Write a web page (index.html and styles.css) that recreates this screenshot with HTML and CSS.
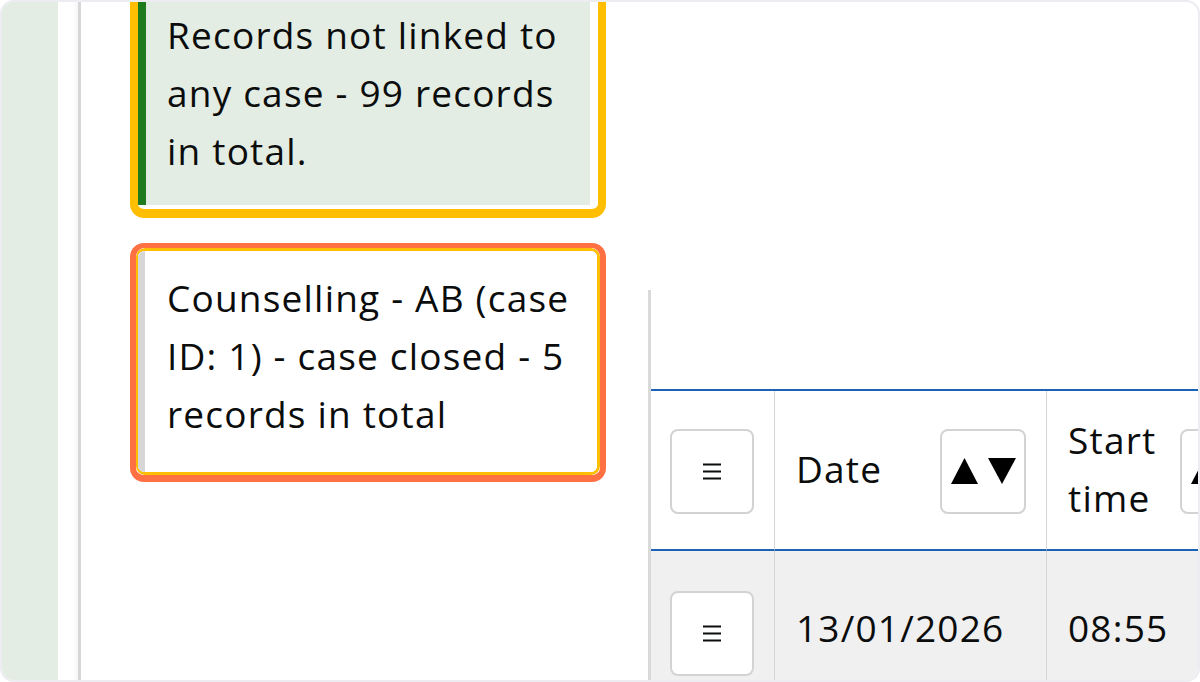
FILE: index.html
```html
<!DOCTYPE html>
<html lang="en">
<head>
<meta charset="utf-8">
<title>Records</title>
<link rel="stylesheet" href="styles.css">
</head>
<body>
<div class="frame">
  <div class="sidebar"></div>
  <div class="gap"></div>
  <main class="panel">
    <div class="cards">
      <div class="ring ring-yellow">
        <div class="card card-green">Records not linked to any case - 99 records in total.</div>
      </div>
      <div class="ring ring-orange">
        <div class="ring-inner">
          <div class="card card-grey">Counselling - AB (case ID: 1) - case closed - 5 records in total</div>
        </div>
      </div>
    </div>
    <section class="records">
      <div class="grid">
        <div class="cell head c1">
          <button class="btn menu-btn" aria-label="Row menu">
            <svg width="20" height="20" viewBox="0 0 20 20"><path d="M1 3.5h18M1 10.5h18M1 17.5h18" stroke="#0b0c0c" stroke-width="2"/></svg>
          </button>
        </div>
        <div class="cell head c2">
          <span class="label">Date</span>
          <button class="btn sort-btn" aria-label="Sort by date">
            <svg width="68" height="28" viewBox="0 0 68 28"><path d="M2 27 L15.5 1 L29 27 Z" fill="#000"/><path d="M39 1 L67 1 L53 27 Z" fill="#000"/></svg>
          </button>
        </div>
        <div class="cell head c3">
          <span class="label narrow">Start time</span>
          <button class="btn sort-btn" aria-label="Sort by start time">
            <svg width="68" height="28" viewBox="0 0 68 28"><path d="M2 27 L15.5 1 L29 27 Z" fill="#000"/><path d="M39 1 L67 1 L53 27 Z" fill="#000"/></svg>
          </button>
        </div>
        <div class="cell body c1">
          <button class="btn menu-btn" aria-label="Row menu">
            <svg width="20" height="20" viewBox="0 0 20 20"><path d="M1 3.5h18M1 10.5h18M1 17.5h18" stroke="#0b0c0c" stroke-width="2"/></svg>
          </button>
        </div>
        <div class="cell body c2"><span class="label">13/01/2026</span></div>
        <div class="cell body c3"><span class="label">08:55</span></div>
      </div>
    </section>
  </main>
</div>
</body>
</html>
```

FILE: styles.css
```css
* { box-sizing: border-box; }
html, body { margin: 0; padding: 0; background: #ffffff; }
body {
  width: 1200px;
  height: 682px;
  overflow: hidden;
  font-family: "Open Sans", "Noto Sans", "Liberation Sans", sans-serif;
  font-size: 37px;
  letter-spacing: 1.2px;
  line-height: 58px;
  color: #0b0c0c;
}
.frame {
  width: 1200px;
  height: 682px;
  border: 2px solid #ececf1;
  border-radius: 14px;
  overflow: hidden;
  display: flex;
  background: #ffffff;
}
.sidebar {
  width: 56px;
  flex: none;
  background: #e3ede3;
}
.gap {
  width: 20px;
  flex: none;
  background: linear-gradient(to right, #ffffff 70%, #f6f6f6);
}
.panel {
  flex: 1;
  display: flex;
  align-items: flex-start;
  border-left: 3px solid #d7d7d7;
  padding-left: 49px;
  min-width: 0;
}
.cards {
  width: 476px;
  flex: none;
  margin-top: -23px;
}
.ring {
  border-radius: 14px;
  overflow: hidden;
  background: #ffffff;
}
.ring-yellow {
  border: 8px solid #ffbf00;
  border-bottom-width: 9px;
  padding: 0 8px 4px 0;
}
.ring-orange {
  margin-top: 25px;
  border: 6px solid #ff7043;
  border-top-width: 5px;
  border-bottom-width: 7px;
}
.ring-inner {
  border: 3px solid #ffbf00;
  border-left-width: 2px;
  border-radius: 9px;
  overflow: hidden;
}
.card {
  padding: 19px 10px 25px 21px;
}
.card-green {
  background: #e3ede3;
  border-left: 8px solid #1e7b1e;
}
.card-grey {
  background: #ffffff;
  border-left: 7px solid #d6d6d6;
  padding: 18px 6px 29px 22px;
}
.records {
  flex: none;
  margin-top: 288px;
  margin-left: 42px;
  border-left: 3px solid #d9d9d9;
  padding-top: 99px;
  height: 500px;
}
.grid {
  display: grid;
  grid-template-columns: 124px 272px 320px;
  border-top: 2px solid #1d63b5;
}
.cell {
  border-right: 1px solid #d5d5d5;
  display: flex;
  align-items: center;
}
.head {
  border-bottom: 2px solid #1d63b5;
  min-height: 160px;
}
.body {
  background: #f0f0f0;
  height: 160px;
}
.c1 { padding: 0 0 0 19px; }
.c2 { padding: 0 20px 0 21px; justify-content: space-between; }
.c3 { padding: 21px 21px; gap: 24px; }
.head.c1, .head.c2 .btn, .head.c3 .btn { }
.head .btn { margin-top: 2px; }
.head.c2 .label, .head.c3 .label { margin-top: -3px; }
.body.c1 { padding-top: 4px; }
.body.c2, .body.c3 { padding-top: 0; padding-bottom: 6px; }
.label.narrow { width: min-content; }
.btn {
  display: flex;
  align-items: center;
  justify-content: center;
  background: #ffffff;
  border: 2px solid #d3d3d3;
  border-radius: 8px;
  padding: 0;
  margin: 0;
  flex: none;
  font: inherit;
}
.menu-btn { width: 84px; height: 85px; }
.sort-btn { width: 86px; height: 85px; }
```
